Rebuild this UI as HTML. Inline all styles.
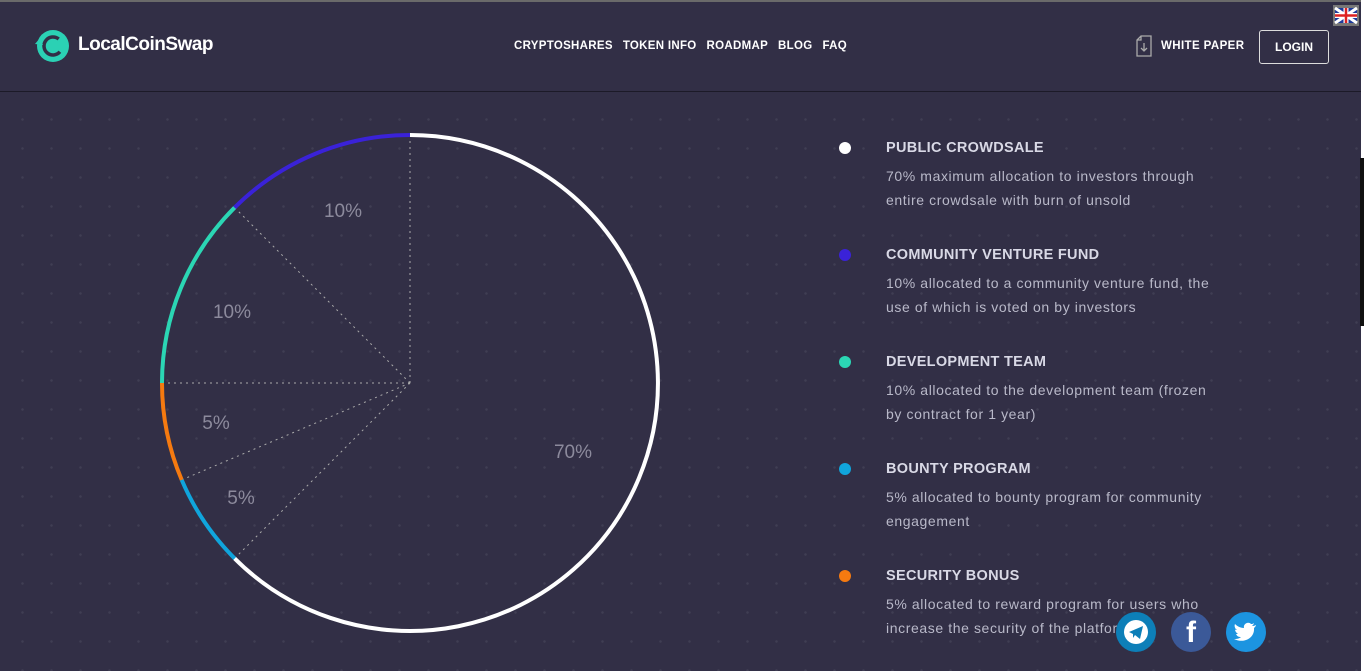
<!DOCTYPE html>
<html><head><meta charset="utf-8"><style>
*{margin:0;padding:0;box-sizing:border-box}
body{width:1364px;height:671px;overflow:hidden;background:#322f46;font-family:"Liberation Sans",sans-serif;position:relative}
.top{position:absolute;left:0;top:0;width:1364px;height:2px;background:#6a6a6a}
.hdr{position:absolute;left:0;top:2px;width:1364px;height:90px;border-bottom:1px solid #1c1a28}
.main{position:absolute;left:0;top:93px;width:1360px;height:578px;background-image:radial-gradient(circle,rgba(255,255,255,0.07) 1px,transparent 1.5px);background-size:29px 29px;background-position:8px 12px}
.nav{position:absolute;top:40px;left:514px;font-size:11.5px;font-weight:bold;color:#fff;letter-spacing:0.3px}
.nav span{margin-right:10px}
.legend{position:absolute;left:886px;color:#b9b9c9}
.legend h3{font-size:14.5px;color:#d9d9e6;font-weight:bold;margin-bottom:8px;letter-spacing:0.3px}
.legend p{font-size:14px;line-height:24px;letter-spacing:0.6px}
.dot{position:absolute;left:839px;width:12px;height:12px;border-radius:50%}
.soc{position:absolute;top:612px;width:40px;height:40px;border-radius:50%}
</style></head><body>
<div class="top"></div>
<div class="main"></div>
<div class="hdr"></div>
<svg style="position:absolute;left:34px;top:28px" width="38" height="36" viewBox="0 0 38 36">
<circle cx="19" cy="18" r="16" fill="#2bd1b4"/>
<circle cx="19" cy="18" r="9" fill="none" stroke="#322f46" stroke-width="3.5" stroke-dasharray="42 20" transform="rotate(40 19 18)"/>
<path d="M1 16 L6 10 L9 17Z" fill="#2bd1b4"/>
</svg>
<div style="position:absolute;left:78px;top:34px;font-size:19px;font-weight:bold;color:#fff;letter-spacing:-0.5px">LocalCoinSwap</div>
<div class="nav"><span>CRYPTOSHARES</span><span>TOKEN INFO</span><span>ROADMAP</span><span>BLOG</span><span>FAQ</span></div>
<svg style="position:absolute;left:1135px;top:35px" width="18" height="22" viewBox="0 0 18 22"><path d="M6 1 H16 V21 H2 V5 Z M6 1 V5 H2" fill="none" stroke="#aaa" stroke-width="1.3"/><path d="M9 8 V16 M6 13 L9 16 L12 13" fill="none" stroke="#aaa" stroke-width="1.3"/></svg>
<div style="position:absolute;left:1161px;top:40px;font-size:11.5px;font-weight:bold;color:#fff;letter-spacing:0.4px">WHITE PAPER</div>
<div style="position:absolute;left:1259px;top:30px;width:70px;height:34px;border:1px solid #ddd;border-radius:3px;color:#fff;font-size:12px;font-weight:bold;text-align:center;line-height:32px">LOGIN</div>
<svg style="position:absolute;left:1333px;top:5px" width="26" height="21" viewBox="0 0 26 21"><rect width="26" height="21" fill="#777"/><rect x="2" y="3" width="22" height="15" fill="#1e3a9a"/><path d="M2 3 L24 18 M24 3 L2 18" stroke="#fff" stroke-width="3"/><path d="M13 3 V18 M2 10.5 H24" stroke="#fff" stroke-width="5"/><path d="M13 3 V18 M2 10.5 H24" stroke="#d22" stroke-width="2.5"/></svg>
<div style="position:absolute;left:1361px;top:0;width:3px;height:671px;background:#fff"></div>
<div style="position:absolute;left:1360px;top:158px;width:4px;height:168px;background:#111"></div>

<svg style="position:absolute;left:0;top:0" width="800" height="671">
<g stroke="#aaa" stroke-width="1" stroke-dasharray="2 4" fill="none">
<line x1="410" y1="383" x2="410" y2="135"/><line x1="410" y1="383" x2="234.6" y2="207.6"/><line x1="410" y1="383" x2="162" y2="383"/><line x1="410" y1="383" x2="181.7" y2="479.9"/><line x1="410" y1="383" x2="234.6" y2="558.4"/>
</g>
<g fill="none" stroke-width="4">
<path d="M410 135 A248 248 0 1 1 234.6 558.4" stroke="#fff"/>
<path d="M234.6 558.4 A248 248 0 0 1 181.7 479.9" stroke="#10a5dc"/>
<path d="M181.7 479.9 A248 248 0 0 1 162 383" stroke="#f57a10"/>
<path d="M162 383 A248 248 0 0 1 234.6 207.6" stroke="#2bd6b4"/>
<path d="M234.6 207.6 A248 248 0 0 1 410 135" stroke="#3a22d8"/>
</g>
<g fill="#8c8a9c" font-size="19" font-family="Liberation Sans" text-anchor="middle">
<text x="343" y="217">10%</text><text x="232" y="318">10%</text><text x="216" y="429">5%</text><text x="241" y="504">5%</text><text x="573" y="458">70%</text>
</g>
</svg>

<div class="dot" style="top:142px;background:#fff"></div>
<div class="legend" style="top:140px"><h3>PUBLIC CROWDSALE</h3><p>70% maximum allocation to investors through<br>entire crowdsale with burn of unsold</p></div>
<div class="dot" style="top:249px;background:#3a22d8"></div>
<div class="legend" style="top:247px"><h3>COMMUNITY VENTURE FUND</h3><p>10% allocated to a community venture fund, the<br>use of which is voted on by investors</p></div>
<div class="dot" style="top:356px;background:#2bd6b4"></div>
<div class="legend" style="top:354px"><h3>DEVELOPMENT TEAM</h3><p>10% allocated to the development team (frozen<br>by contract for 1 year)</p></div>
<div class="dot" style="top:463px;background:#10a5dc"></div>
<div class="legend" style="top:461px"><h3>BOUNTY PROGRAM</h3><p>5% allocated to bounty program for community<br>engagement</p></div>
<div class="dot" style="top:570px;background:#f57a10"></div>
<div class="legend" style="top:568px"><h3>SECURITY BONUS</h3><p>5% allocated to reward program for users who<br>increase the security of the platform</p></div>

<div class="soc" style="left:1116px;background:#0d7fb8"><svg width="40" height="40"><circle cx="20" cy="20" r="12" fill="#fff"/><path d="M13 20 L27 14 L24 27 L19 23 L17 26 L17 22 Z" fill="#0d7fb8"/></svg></div>
<div class="soc" style="left:1171px;background:#3b5998"><div style="color:#fff;font-size:30px;font-weight:bold;text-align:center;line-height:42px">f</div></div>
<div class="soc" style="left:1226px;background:#1c94e0"><svg width="40" height="40"><path d="M30 13 C28 14 27 14 26 14 C27 13 28 12 28 11 C27 12 26 12 25 12 C22 9 17 12 18 16 C14 16 11 14 9 12 C8 14 9 17 11 18 C10 18 9 18 9 17 C9 20 11 21 12 22 C11 22 10 22 10 22 C11 24 12 25 15 25 C13 27 10 27 8 27 C18 32 29 26 28 16 C29 15 30 14 30 13Z" fill="#fff"/></svg></div>
</body></html>
